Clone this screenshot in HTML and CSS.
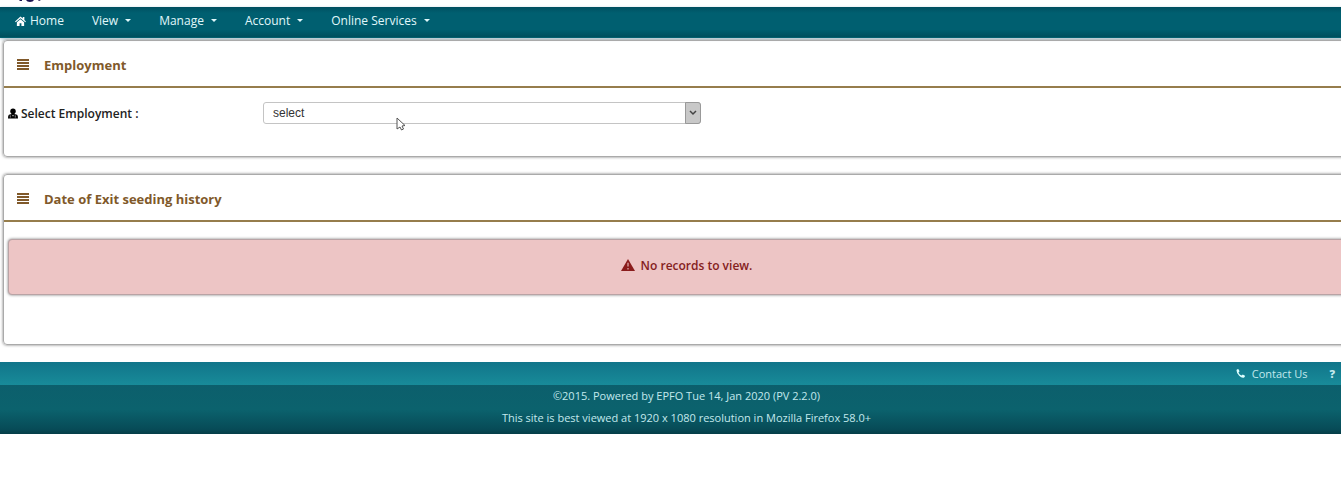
FILE: index.html
```html
<!DOCTYPE html>
<html lang="en">
  <head>
    <meta charset="UTF-8" />
    <meta name="viewport" content="width=device-width, initial-scale=1.0" />
    <title>Employment</title>
    <link rel="stylesheet" href="styles.css" />
  </head>
  <body>
    <div class="page">
      <header>
        <svg class="brand" viewBox="0 0 24 2" aria-hidden="true">
          <path d="M1 0h3v1H2zM8 0h8q-1 2-4 2T8 0zM20 0h3l-2 1z" />
        </svg>
      </header>
      <nav class="navbar">
        <a href="#" class="nav-home">
          <svg class="icon-home" viewBox="0 0 24 22">
            <path d="M12 1 0 12l1.500 2L12 5l10.500 9 1.500-2-3.500-3.200V2h-3.500v3.500z" />
            <path d="M12 7 4 14v8h6v-6h4v6h6v-8z" />
          </svg>
          Home
        </a>
        <a href="#" class="nav-link">View <span class="caret"></span></a>
        <a href="#" class="nav-link">Manage <span class="caret"></span></a>
        <a href="#" class="nav-link">Account <span class="caret"></span></a>
        <a href="#" class="nav-link">Online Services <span class="caret"></span></a>
      </nav>

      <main>
        <section class="panel">
          <h2 class="panel-title"><span class="bars"></span>Employment</h2>
          <div class="panel-body form-row">
            <label for="employment">
              <svg class="icon-user" viewBox="0 0 22 22">
                <circle cx="11" cy="6" r="6" />
                <path d="M7 9h8l-1 3 6 2q2 1 2 8H0q0-7 2-8l6-2z" />
                <path class="cut" d="M5 15v5M16 15v5M9 14l2 3 2-3" />
              </svg>
              Select Employment :
            </label>
            <div class="select-box">
              <select id="employment">
                <option>select</option>
              </select>
              <span class="select-arrow">
                <svg viewBox="0 0 8 6"><path d="M1 1l3 3 3-3" /></svg>
              </span>
              <svg class="pointer" viewBox="0 0 10 14">
                <path d="M1 1v11l3-2 1.500 3 2-1-1.500-3 3-.5z" />
              </svg>
            </div>
          </div>
        </section>

        <section class="panel">
          <h2 class="panel-title"><span class="bars"></span>Date of Exit seeding history</h2>
          <div class="panel-body history">
            <div class="alert">
              <svg class="icon-warning" viewBox="0 0 26 22">
                <path d="M13 0 26 22H0z" />
                <path class="mark" d="M13 7v7M13 16.500v3" />
              </svg>
              No records to view.
            </div>
          </div>
        </section>
      </main>

      <footer>
        <div class="footer-links">
          <a href="#">
            <svg class="icon-phone" viewBox="0 0 20 20">
              <path d="M1 2q2-2 4-2l3 5-2.500 2.500q2 5 7 7L15 12l5 3q0 3-2 4-5 2-11-4T1 2z" />
            </svg>
            Contact Us
          </a>
          <a href="#" class="help" aria-label="Help">?</a>
        </div>
        <div class="footer-info">
          <p>©2015. Powered by EPFO Tue 14, Jan 2020 (PV 2.2.0)</p>
          <p>This site is best viewed at 1920 x 1080 resolution in Mozilla Firefox 58.0+</p>
        </div>
      </footer>
    </div>
  </body>
</html>
```
FILE: styles.css
```css
body {
  margin: 0;
  font-family: "Open Sans", "Noto Sans", sans-serif;
  font-size: 12px;
  background: #fff;
  color: #222;
  overflow-x: hidden;
}

/* content runs on past the right edge of the window */
.page {
  width: calc(100% + 32px);
}

a {
  color: inherit;
  text-decoration: none;
}

header {
  height: 7px;
  padding-left: 18px;
  box-sizing: border-box;
}

.brand {
  display: block;
  width: 24px;
  height: 2px;
  fill: #1c1452;
}

/* ========== Navigation ========== */
.navbar {
  display: flex;
  align-items: center;
  gap: 28px;
  height: 31px;
  padding: 0 15px 3px;
  box-sizing: border-box;
  background: linear-gradient(#004f60, #005f70 20%, #005f70 75%, #004f5d);
  color: #e0f8fb;
  border-bottom: 1px solid #00606f;
  box-shadow: 0 1px 3px #a9c4d4;
}

.navbar a {
  display: flex;
  align-items: center;
}

.nav-home {
  gap: 4px;
}

.nav-link {
  gap: 7px;
}

.icon-home {
  width: 11px;
  height: 10px;
  fill: #fff;
}

.caret {
  border: 3px solid transparent;
  border-top-color: currentColor;
  border-bottom: 0;
}

/* ========== Panels ========== */
.panel {
  margin: 2px 3px 17px;
  border: 1px solid #aaa;
  border-radius: 4px;
  box-shadow: 0 0 3px #777;
}

.panel-title {
  display: flex;
  align-items: center;
  gap: 15px;
  height: 47px;
  padding: 2px 0 0 13px;
  box-sizing: border-box;
  margin: 0;
  border-bottom: 2px solid #967d4c;
  font-size: 13px;
  font-weight: 700;
  color: #80592a;
}

.bars {
  width: 12px;
  height: 11px;
  background: repeating-linear-gradient(#80592a 0 2px, transparent 2px 3px);
}

.panel-body {
  padding: 0 4px;
}

/* ========== Form ========== */
.form-row {
  display: flex;
  align-items: flex-start;
  height: 54px;
  padding-top: 14px;
}

.form-row label {
  display: flex;
  align-items: center;
  gap: 3px;
  width: 255px;
  height: 22px;
  font-weight: 600;
}

.icon-user {
  width: 10px;
  height: 11px;
}

.cut {
  fill: none;
  stroke: #bbb;
  stroke-width: 1.5;
}

.select-box {
  position: relative;
  width: 438px;
}

.select-box select {
  display: block;
  width: 100%;
  height: 22px;
  padding: 0 24px 0 9px;
  appearance: none;
  border: 1px solid #c4c4c4;
  border-radius: 3px;
  background: #fff;
  font-family: "Liberation Sans", Arial, sans-serif;
  font-size: 12px;
  color: #333;
}

.select-arrow {
  position: absolute;
  top: 0;
  right: 0;
  display: flex;
  align-items: center;
  justify-content: center;
  width: 16px;
  height: 22px;
  box-sizing: border-box;
  border: 1px solid #999;
  border-radius: 0 3px 3px 0;
  background: #c8c8c8;
  pointer-events: none;
}

.select-arrow svg {
  width: 8px;
  height: 6px;
  fill: none;
  stroke: #444;
  stroke-width: 1.5;
}

.pointer {
  position: absolute;
  top: 15px;
  left: 133px;
  width: 10px;
  height: 14px;
  fill: #fff;
  stroke: #555;
}

/* ========== History ========== */
.history {
  height: 105px;
  padding-top: 17px;
}

.alert {
  display: flex;
  align-items: center;
  justify-content: center;
  gap: 6px;
  height: 56px;
  padding-bottom: 4px;
  box-sizing: border-box;
  border: 1px solid #b9a3a5;
  border-radius: 4px;
  box-shadow: 0 0 3px #777;
  background: #edc5c5;
  font-weight: 600;
  color: #842020;
}

.icon-warning {
  width: 14px;
  height: 12px;
  fill: #8a1c1c;
}

.mark {
  stroke: #edc5c5;
  stroke-width: 2;
}

/* ========== Footer ========== */
footer {
  color: #c2e9ed;
  font-size: 11px;
}

.footer-links {
  display: flex;
  align-items: center;
  justify-content: flex-end;
  gap: 22px;
  height: 23px;
  padding-right: 38px;
  background: linear-gradient(#11758a, #188b99);
}

.footer-links a {
  display: flex;
  align-items: center;
  gap: 7px;
}

.icon-phone {
  width: 9px;
  height: 9px;
  fill: #e0ffff;
}

.help {
  font-weight: 800;
}

.footer-info {
  height: 49px;
  background: linear-gradient(#0c5f6c, #0b626d 50%, #074b57 90%, #053d47);
  text-align: center;
}

.footer-info p {
  margin: 0;
  line-height: 22px;
}
```
